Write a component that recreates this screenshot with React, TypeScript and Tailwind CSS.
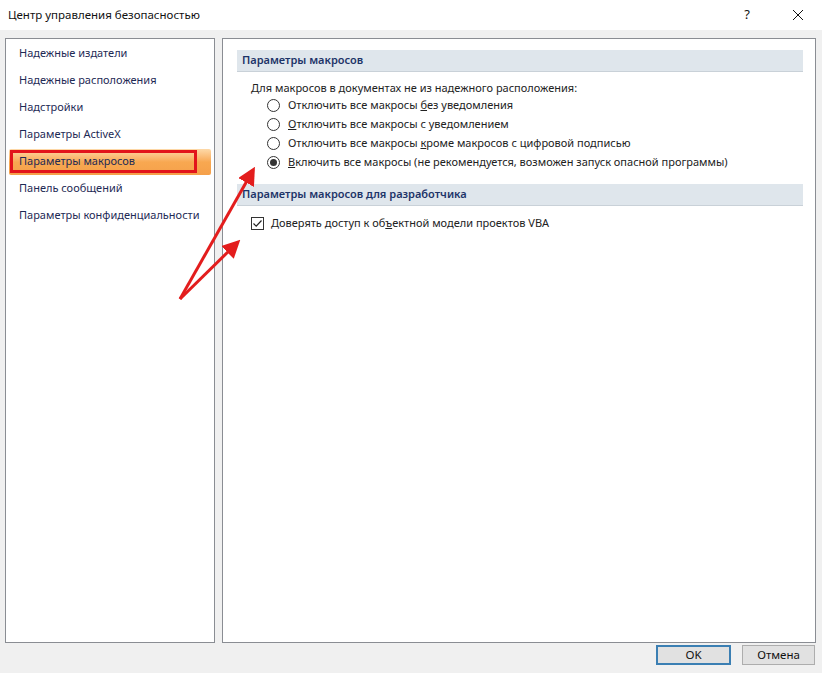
import React from 'react'

const font = { fontFamily: '"Noto Sans", "Open Sans", sans-serif' }

const navItems = [
  'Надежные издатели',
  'Надежные расположения',
  'Надстройки',
  'Параметры ActiveX',
  'Параметры макросов',
  'Панель сообщений',
  'Параметры конфиденциальности',
]

const Radio = ({ checked }: { checked?: boolean }) => (
  <span className="flex h-[13px] w-[13px] shrink-0 items-center justify-center rounded-full border border-[#333] bg-white">
    {checked && <span className="h-[7px] w-[7px] rounded-full bg-[#333]" />}
  </span>
)

const SectionHeader = ({ title }: { title: string }) => (
  <div className="flex h-[22px] items-center border-b border-[#c9d1d8] bg-[#dfe6ec] pl-[5px] text-[11px] font-semibold text-[#1d3468]">
    {title}
  </div>
)

const App = () => {
  const options: React.ReactNode[] = [
    <>Отключить все макросы <u>б</u>ез уведомления</>,
    <><u>О</u>тключить все макросы с уведомлением</>,
    <>Отключить все макросы <u>к</u>роме макросов с цифровой подписью</>,
    <><u>В</u>ключить все макросы (не рекомендуется, возможен запуск опасной программы)</>,
  ]

  return (
    <div className="relative flex h-[673px] w-[822px] flex-col overflow-hidden bg-[#f0f0f0] text-[11px]" style={font}>
      {/* title bar */}
      <div className="flex h-[30px] items-center bg-white pl-[8px] text-[11.5px] text-[#111]">
        <span className="flex-1">Центр управления безопасностью</span>
        <span className="w-[20px] text-center text-[13px]">?</span>
        <span className="ml-[35px] mr-[14px] w-[16px]">
          <svg width="12" height="12" viewBox="0 0 12 12">
            <path d="M1 1L11 11M11 1L1 11" stroke="#111" strokeWidth="1" />
          </svg>
        </span>
      </div>

      {/* panels */}
      <div className="mt-[8px] flex h-[605px] gap-[7px] pl-[5px] pr-[6px]">
        <div className="w-[210px] border border-[#8a8d93] bg-white pt-[1px]">
          {navItems.map((item, i) => (
            <div key={item} className="relative flex h-[27px] items-center whitespace-nowrap px-[3px]">
              {i === 4 ? (
                <div className="flex h-[26px] w-full items-center rounded-[2px] bg-gradient-to-b from-[#fdd9a8] via-[#f8a851] to-[#f5a04a] pl-[1px]">
                  <div className="flex h-[23px] w-[187px] items-center border-[3px] border-[#e2141b] pl-[6px] text-[#1e2a55]">
                    {item}
                  </div>
                </div>
              ) : (
                <span className="pl-[10px] text-[#1e2a55]">{item}</span>
              )}
            </div>
          ))}
        </div>

        <div className="flex-1 border border-[#8a8d93] bg-white pl-[14px] pr-[12px] pt-[11px]">
          <SectionHeader title="Параметры макросов" />
          <div className="pl-[14px] pt-[7px] text-[#222]">
            <div className="h-[17px] leading-[17px]">Для макросов в документах не из надежного расположения:</div>
            <div className="flex flex-col pl-[16px]">
              {options.map((opt, i) => (
                <label key={i} className="flex h-[19px] items-center gap-[8px]">
                  <Radio checked={i === 3} />
                  <span>{opt}</span>
                </label>
              ))}
            </div>
          </div>

          <div className="mt-[12px]">
            <SectionHeader title="Параметры макросов для разработчика" />
          </div>
          <label className="flex h-[34px] items-center gap-[7px] pl-[14px] text-[#222]">
            <span className="flex h-[13px] w-[13px] items-center justify-center border border-[#333] bg-white">
              <svg width="11" height="11" viewBox="0 0 11 11">
                <path d="M1.5 5.5L4.2 8.2L9.5 2.5" fill="none" stroke="#222" strokeWidth="1.2" />
              </svg>
            </span>
            <span>Доверять доступ к об<u>ъ</u>ектной модели проектов VBA</span>
          </label>
        </div>
      </div>

      {/* buttons */}
      <div className="flex justify-end gap-[11px] pr-[7px] pt-[2px]">
        <button className="h-[20px] w-[75px] border-2 border-[#3b7fb3] bg-[#e1e1e1] text-[11.5px] leading-none text-[#111]">
          OK
        </button>
        <button className="h-[20px] w-[73px] border border-[#adadad] bg-[#e1e1e1] text-[11.5px] leading-none text-[#111]">
          Отмена
        </button>
      </div>

      {/* red annotation arrows */}
      <svg className="pointer-events-none absolute left-0 top-0" width="822" height="673">
        <defs>
          <marker id="head" markerWidth="6" markerHeight="6" refX="4" refY="3" orient="auto" markerUnits="strokeWidth">
            <path d="M0 0L6 3L0 6Z" fill="#e31d1d" />
          </marker>
        </defs>
        <line x1="180" y1="299" x2="252" y2="172" stroke="#e31d1d" strokeWidth="3" markerEnd="url(#head)" />
        <line x1="180" y1="299" x2="236" y2="244" stroke="#e31d1d" strokeWidth="3" markerEnd="url(#head)" />
      </svg>
    </div>
  )
}

export default App
